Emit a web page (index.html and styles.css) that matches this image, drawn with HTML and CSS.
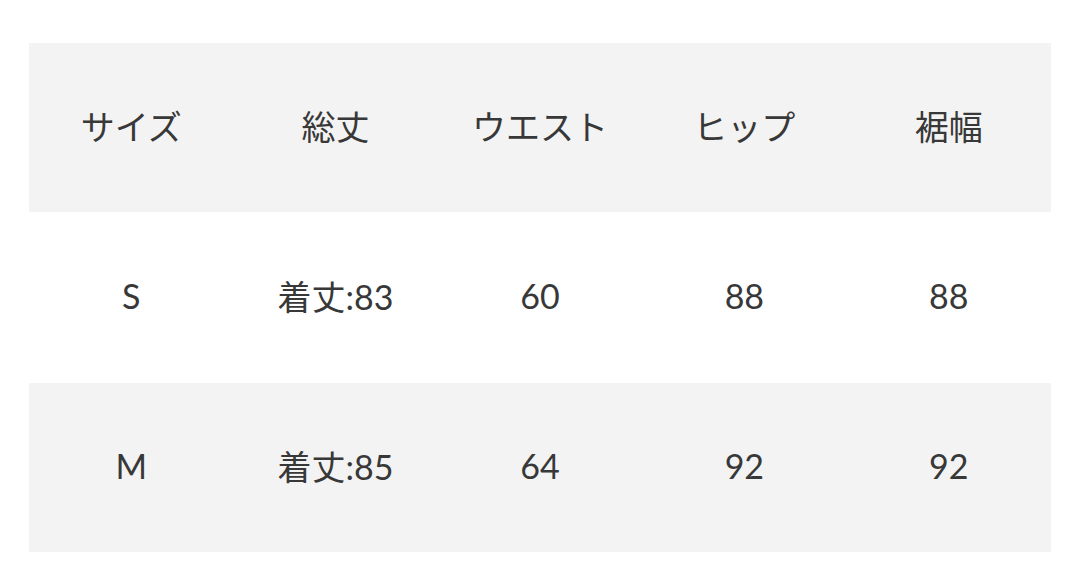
FILE: index.html
```html
<!DOCTYPE html>
<html lang="ja">
<head>
<meta charset="utf-8">
<link rel="stylesheet" href="styles.css">
</head>
<body>
<div class="wrap">
<table class="size-table">
<tr class="row gray head">
<td>サイズ</td><td>総丈</td><td>ウエスト</td><td>ヒップ</td><td>裾幅</td>
</tr>
<tr class="row white mid">
<td>S</td><td>着丈:83</td><td>60</td><td>88</td><td>88</td>
</tr>
<tr class="row gray head">
<td>M</td><td>着丈:85</td><td>64</td><td>92</td><td>92</td>
</tr>
</table>
</div>
</body>
</html>
```
FILE: styles.css
```css
html, body {
  margin: 0;
  padding: 0;
  background: #ffffff;
}
.wrap {
  padding: 43px 29px 0 29px;
}
.size-table {
  width: 1022px;
  border-collapse: collapse;
  table-layout: fixed;
  font-family: "Lato", "Noto Sans CJK JP", sans-serif;
  font-size: 34px;
  font-weight: 400;
  color: #383838;
}
.size-table td {
  text-align: center;
  vertical-align: middle;
  padding: 0 0 4px 0;
}
.row.head td { height: 165px; }
.row.mid td { height: 167px; }
.gray { background: #f3f3f3; }
.white { background: #ffffff; }
```
